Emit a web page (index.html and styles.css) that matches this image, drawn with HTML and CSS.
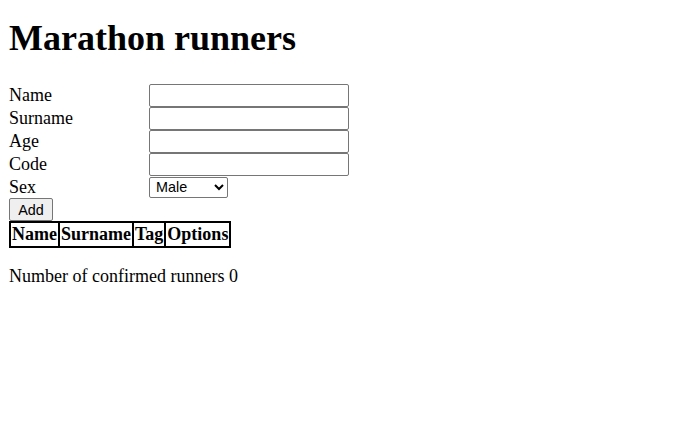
FILE: index.html
```html
<!DOCTYPE html>
<html>
<head>
<meta charset="utf-8">
<link rel="stylesheet" href="styles.css">
</head>
<body>
<h1 class="title">Marathon runners</h1>
<form class="form">
  <div class="row"><label class="lbl">Name</label><input class="field" type="text"></div>
  <div class="row"><label class="lbl">Surname</label><input class="field" type="text"></div>
  <div class="row"><label class="lbl">Age</label><input class="field" type="text"></div>
  <div class="row"><label class="lbl">Code</label><input class="field" type="text"></div>
  <div class="row row-sel"><label class="lbl">Sex</label><select class="sel"><option>Male</option><option>Female</option></select></div>
  <button class="btn" type="button">Add</button>
</form>
<table class="tbl">
  <tr><th>Name</th><th>Surname</th><th>Tag</th><th>Options</th></tr>
</table>
<p class="count">Number of confirmed runners 0</p>
</body>
</html>
```
FILE: styles.css
```css
body {
  margin: 0;
  padding: 0 9px;
  font-family: "Liberation Serif", serif;
  font-size: 18px;
  color: #000;
  background: #fff;
}
.title {
  font-size: 36px;
  line-height: 41px;
  margin: 0;
  padding: 18px 0 25px;
}
.form { margin: 0; }
.row {
  display: flex;
  align-items: center;
  height: 23px;
}
.row-sel { height: 22px; }
.lbl {
  width: 140px;
}
.field {
  width: 200px;
  height: 23px;
  box-sizing: border-box;
  border: 1px solid #767676;
  border-radius: 2px;
  margin: 0;
  font-family: "Liberation Sans", sans-serif;
  font-size: 14.4px;
}
.sel {
  width: 79px;
  height: 21px;
  box-sizing: border-box;
  margin: 0;
  padding: 0 0 0 2px;
  font-family: "Liberation Sans", sans-serif;
  font-size: 14.4px;
  color: #000;
  border: 1px solid #767676;
  border-radius: 2px;
  background: #fff;
}
.btn {
  display: block;
  margin: 0;
  height: 23px;
  width: 44px;
  padding: 0;
  font-family: "Liberation Sans", sans-serif;
  font-size: 14.4px;
  color: #000;
  background: #efefef;
  border: 1px solid #767676;
  border-radius: 2px;
}
.tbl {
  border-collapse: collapse;
  border: 2px solid #000;
}
.tbl th {
  border: 2px solid #000;
  padding: 1px;
  font-weight: bold;
}
.count { margin: 18px 0; }
```
